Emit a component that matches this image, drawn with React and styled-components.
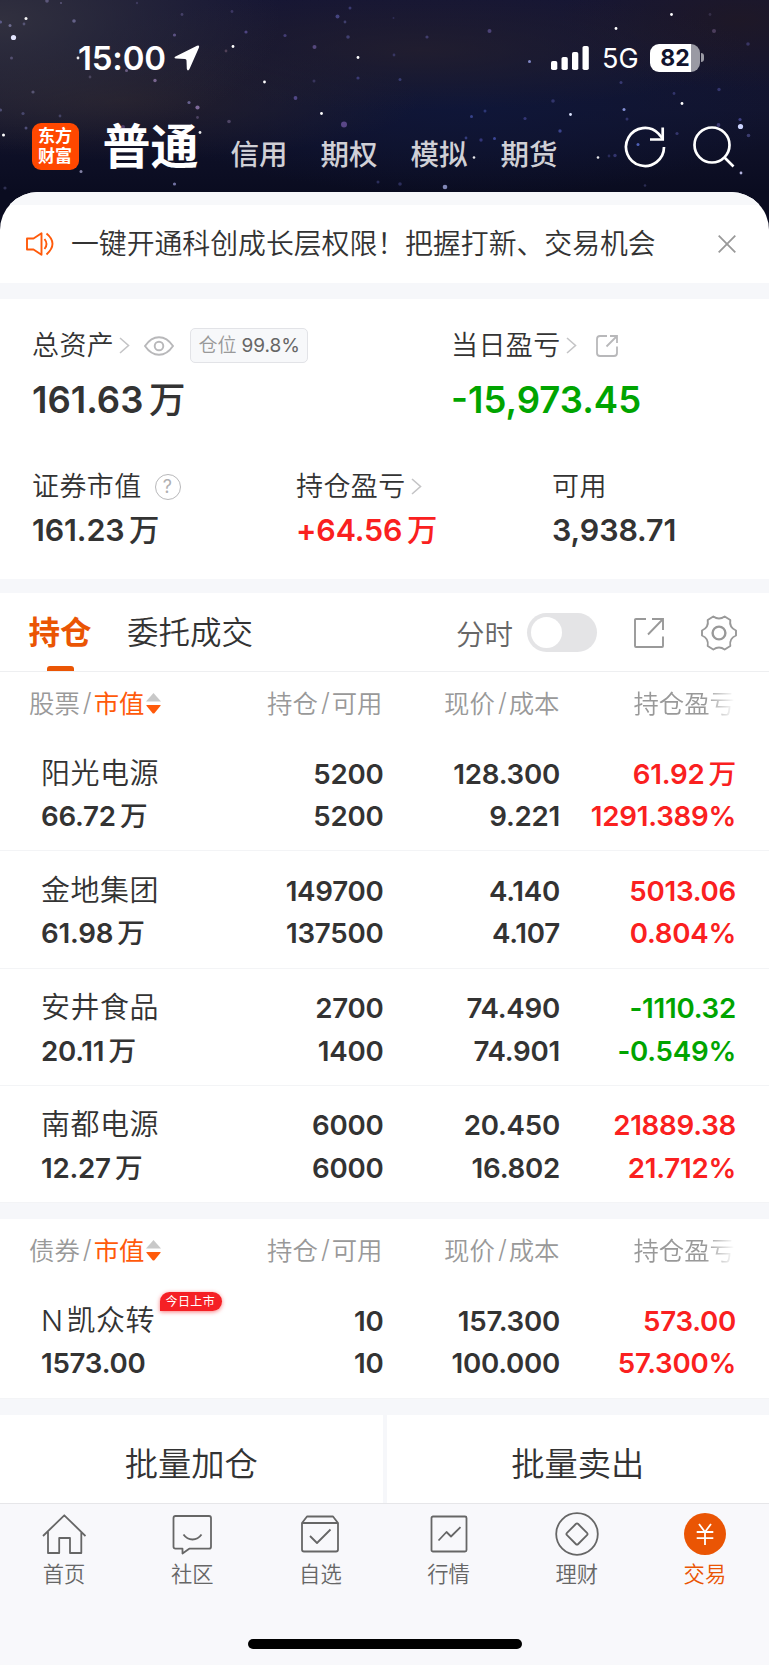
import React from "react";
import styled, { createGlobalStyle } from "styled-components";

const stocks = [
  {
    name: "阳光电源",
    value: "66.72",
    unit: "万",
    hold: ["5200", "5200"],
    price: ["128.300", "9.221"],
    profit: "61.92",
    profitUnit: "万",
    rate: "1291.389%",
    color: "red",
  },
  {
    name: "金地集团",
    value: "61.98",
    unit: "万",
    hold: ["149700", "137500"],
    price: ["4.140", "4.107"],
    profit: "5013.06",
    rate: "0.804%",
    color: "red",
  },
  {
    name: "安井食品",
    value: "20.11",
    unit: "万",
    hold: ["2700", "1400"],
    price: ["74.490", "74.901"],
    profit: "-1110.32",
    rate: "-0.549%",
    color: "green",
  },
  {
    name: "南都电源",
    value: "12.27",
    unit: "万",
    hold: ["6000", "6000"],
    price: ["20.450", "16.802"],
    profit: "21889.38",
    rate: "21.712%",
    color: "red",
  },
];

const bonds = [
  {
    prefix: "N",
    name: "凯众转",
    tag: "今日上市",
    value: "1573.00",
    hold: ["10", "10"],
    price: ["157.300", "100.000"],
    profit: "573.00",
    rate: "57.300%",
    color: "red",
  },
];

// x, y, radius, opacity, color
const stars = [
  [13.5, 37.5, 2.6, 1, "#e4e6ff"],
  [26, 18.5, 1.5, 0.95, "#fff"],
  [10, 25.5, 1.5, 0.6, "#9a98c8"],
  [24, 24, 1.4, 0.45, "#8886b8"],
  [0.5, 22, 1.6, 0.6, "#7a78b8"],
  [47, 1, 1.8, 0.5, "#8c84b8"],
  [61, 3, 1, 0.5, "#8c84b8"],
  [74, 21, 1.8, 0.6, "#8e88bc"],
  [11.5, 58, 1.5, 0.5, "#8078a8"],
  [78, 58, 1.4, 0.9, "#fff"],
  [137, 3, 1.2, 0.3, "#7a70b0"],
  [182, 14.5, 1.4, 0.4, "#7c70b0"],
  [174.5, 35, 1.6, 0.6, "#8474b8"],
  [232, 11.5, 1.4, 0.4, "#6c60a8"],
  [246, 32, 1.6, 0.6, "#6f60b8"],
  [233, 46.5, 1.4, 1, "#fff"],
  [226, 51, 1.4, 0.4, "#9a7890"],
  [126.5, 70.5, 1.5, 0.6, "#9a86b8"],
  [155, 80.5, 1.7, 0.65, "#a68ac0"],
  [90, 77, 1.4, 0.35, "#8c80a8"],
  [33, 92, 1.6, 0.5, "#8884b0"],
  [264.5, 82, 1.4, 1, "#fff"],
  [189, 102.5, 1.6, 0.65, "#8c84c0"],
  [197.5, 107.5, 2.1, 0.7, "#a68ac8"],
  [197.5, 117.5, 1.4, 0.45, "#8470a0"],
  [229, 121.5, 1.8, 0.5, "#84709c"],
  [200, 132.5, 1.4, 0.9, "#fff"],
  [0.5, 110, 1.6, 0.55, "#7474ac"],
  [23, 113.5, 1.6, 0.5, "#6c6ca4"],
  [3.5, 135, 1.5, 1, "#fff"],
  [26, 128, 1.5, 0.55, "#7878b4"],
  [60, 116, 1.4, 0.4, "#7878b4"],
  [81, 171.5, 1.5, 0.75, "#aaa8d0"],
  [174.5, 184, 1.6, 0.7, "#9c9cd8"],
  [5, 188, 1.6, 0.4, "#6666a0"],
  [123, 127, 2, 0.55, "#7c5ca0"],
  [285, 35.5, 1.6, 0.5, "#6c60b8"],
  [295.5, 98, 1.9, 0.6, "#7466c0"],
  [314.5, 47, 2, 0.6, "#7c68b0"],
  [337.5, 16.5, 2, 0.55, "#6868c0"],
  [350, 8, 1.5, 0.5, "#5c5cb0"],
  [345, 22, 1.4, 0.5, "#6464a8"],
  [348, 37, 1.8, 0.5, "#6464b0"],
  [358, 57.5, 1.4, 1, "#fff"],
  [321.5, 113.5, 1.4, 1, "#fff"],
  [344, 124.5, 3, 0.6, "#8868c0"],
  [314, 81, 1.5, 0.35, "#7468b0"],
  [358, 78, 1.6, 0.5, "#5c5cb8"],
  [394, 55, 1.4, 0.4, "#6060b0"],
  [393.5, 18, 1, 0.3, "#6060b0"],
  [427, 37, 1.6, 0.5, "#6460a8"],
  [489.5, 31, 2, 0.55, "#7464b0"],
  [400, 79.5, 1.5, 0.45, "#6068c0"],
  [529.5, 61.5, 1.5, 0.8, "#98a0e8"],
  [553, 101, 1.8, 0.45, "#5c5cb0"],
  [570.5, 114.5, 1.4, 1, "#dce4ff"],
  [485, 111, 1.5, 0.45, "#5060c0"],
  [471.5, 116.5, 1.5, 0.55, "#5868d0"],
  [525, 118.5, 1.6, 0.5, "#5858b8"],
  [481, 140, 1.7, 0.5, "#5858c0"],
  [494.5, 138.5, 1.5, 0.6, "#5868d8"],
  [560, 131, 1.7, 0.6, "#5864c8"],
  [466, 138, 1.4, 0.5, "#5864c8"],
  [474, 157.5, 1.3, 0.9, "#fff"],
  [598, 157.5, 1.3, 0.9, "#fff"],
  [445, 187, 2.3, 0.75, "#a8b0e8"],
  [400, 184, 1.8, 0.4, "#5c60b0"],
  [378, 182, 1.5, 0.4, "#5c60b0"],
  [616, 28.5, 1.4, 1, "#fff"],
  [671.5, 14.5, 1.4, 1, "#fff"],
  [714, 31, 2, 0.5, "#7c6490"],
  [748, 44, 1.8, 0.5, "#58549c"],
  [710, 14.5, 1.4, 0.3, "#6c6490"],
  [621, 82.5, 1.5, 0.5, "#5c5cb0"],
  [624, 109.5, 1.5, 0.85, "#98a4f0"],
  [682, 103.5, 1.4, 1, "#fff"],
  [674, 93.5, 1.4, 0.45, "#5c5cb0"],
  [719, 89.5, 1.7, 0.5, "#5858a8"],
  [627, 119, 1.5, 0.45, "#5c5cb0"],
  [638, 144.5, 1.5, 0.7, "#6880f0"],
  [740.5, 126.5, 2.6, 1, "#ccd4ff"],
  [740, 119.5, 1.6, 0.6, "#6060c0"],
  [718.5, 125, 1.9, 0.55, "#6058a8"],
  [748.5, 135.5, 1.8, 0.55, "#6060a8"],
  [677, 133.5, 1.6, 0.5, "#5858a8"],
  [615, 155.5, 1.7, 0.5, "#5858b0"],
  [609, 156, 1.4, 0.35, "#5858b0"],
  [741, 173, 1.4, 0.85, "#d0d0ff"],
  [645, 185.5, 1.3, 0.35, "#6868b0"],
];

const Star = ({ data: [cx, cy, r, opacity, fill] }) => (
  <circle cx={cx} cy={cy} r={r} opacity={opacity} fill={fill} />
);

const Chevron = () => (
  <svg width='11' height='17' viewBox='0 0 11 17' fill='none' stroke='#c4c4c6' strokeWidth='1.6'>
    <path d='M1 1l8.5 7.5L1 16' />
  </svg>
);

const HoldingRow = ({ item }) => (
  <Row>
    <div>
      <Name>
        {item.prefix && <Prefix>{item.prefix}</Prefix>}
        {item.name}
        {item.tag && <Tag>{item.tag}</Tag>}
      </Name>
      <Num>
        {item.value}
        {item.unit && <Unit>{item.unit}</Unit>}
      </Num>
    </div>
    <Cell>
      {item.hold.map((v, i) => (
        <Num key={i}>{v}</Num>
      ))}
    </Cell>
    <Cell>
      {item.price.map((v, i) => (
        <Num key={i}>{v}</Num>
      ))}
    </Cell>
    <Cell>
      <Num $color={item.color}>
        {item.profit}
        {item.profitUnit && <Unit>{item.profitUnit}</Unit>}
      </Num>
      <Num $color={item.color}>{item.rate}</Num>
    </Cell>
  </Row>
);

const Holdings = ({ title, items }) => (
  <section>
    <TableHead>
      <HeadCell $left>
        {title}
        <Slash>/</Slash>
        <b>市值</b>
        <svg width='15' height='21' viewBox='0 0 15 21'>
          <path d='M7.5 0L15 8.5H0z' fill='#c8c8c8' />
          <path d='M0.8 12h13.4q.8 0 .3.7L8.6 20q-1.1 1.2-2.2 0L.5 12.7q-.5-.7.3-.7z' fill='#ff5a0a' />
        </svg>
      </HeadCell>
      <HeadCell>
        持仓<Slash>/</Slash>可用
      </HeadCell>
      <HeadCell>
        现价<Slash>/</Slash>成本
      </HeadCell>
      <HeadCell $fade>持仓盈亏</HeadCell>
    </TableHead>
    {items.map((item) => (
      <HoldingRow key={item.name} item={item} />
    ))}
  </section>
);

const tabs = [
  {
    label: "首页",
    icon: <path d='M1 24L22.3 3.3 43.5 24M6 20v21h11.2V26H28v15h11.3V20' />,
  },
  {
    label: "社区",
    icon: (
      <>
        <path d='M5.500 4h33.500q2 0 2 2v28.700q0 2-2 2H19.200L12.500 41.500v-4.800H5.500q-2 0-2-2V6q0-2 2-2z' />
        <path d='M13.500 22.500q3.500 5 9 5t9-5' />
      </>
    ),
  },
  {
    label: "自选",
    icon: (
      <>
        <path d='M4 11v26.500q0 2 2 2h32q2 0 2-2V11l-5-6.500H9zM4 11h36' />
        <path d='M12 24l7 7 13.500-13.500' />
      </>
    ),
  },
  {
    label: "行情",
    icon: (
      <>
        <rect x='4.5' y='4.5' width='35' height='35' rx='1.5' />
        <path d='M11.500 28.500l8-8.500 4.500 4.500 9.500-9.300' />
      </>
    ),
  },
  {
    label: "理财",
    icon: (
      <>
        <circle cx='22' cy='22' r='20.8' />
        <path d='M20.800 12q1.200-1.200 2.400 0l8.800 8.800q1.200 1.200 0 2.400L23.200 32q-1.200 1.200-2.400 0L12 23.200q-1.200-1.200 0-2.400z' />
      </>
    ),
  },
  {
    label: "交易",
    active: true,
    icon: (
      <>
        <circle cx='22' cy='22' r='21' fill='#ea5504' stroke='none' />
        <path d='M16 12l6 8L28 12M22 20V33M13.700 20h16.600M13.700 26.200h16.600' stroke='#fff' />
      </>
    ),
  },
];

const App = () => {
  return (
    <>
      <GlobalStyle />
      <Screen>
        <Header>
          <Sky viewBox='0 0 769 232'>
            {stars.map((s, i) => (
              <Star key={i} data={s} />
            ))}
          </Sky>
          <StatusBar>
            <Time>15:00</Time>
            <svg width='26' height='26' viewBox='0 0 26 26'>
              <path
                d='M1.500 11.500L23 .8q2.700-1 2 1.700L15.500 24q-1.800 3-2.700-.3l-.3-8.200q0-1.500-1.500-1.500l-9-.5q-2.700-.5-.5-2z'
                fill='#fff'
              />
            </svg>
            <StatusRight>
              <svg width='38' height='24' viewBox='0 0 38 24' fill='#fff'>
                <rect x='0' y='15' width='6.3' height='9' rx='1.8' />
                <rect x='10.5' y='11' width='6.3' height='13' rx='1.8' />
                <rect x='21' y='6' width='6.3' height='18' rx='1.8' />
                <rect x='31.5' y='0' width='6.3' height='24' rx='1.8' />
              </svg>
              <Network>5G</Network>
              <Battery>82</Battery>
              <BatteryCap />
            </StatusRight>
          </StatusBar>
          <NavBar>
            <Logo>
              <span>东方</span>
              <span>财富</span>
            </Logo>
            <NavCurrent>普通</NavCurrent>
            <NavItem>信用</NavItem>
            <NavItem>期权</NavItem>
            <NavItem>模拟</NavItem>
            <NavItem>期货</NavItem>
            <NavIcons>
              <svg width='42' height='42' viewBox='0 0 42 42' fill='none' stroke='#fff' strokeWidth='2.7'>
                <path d='M40 21A19 19 0 1 1 34.500 7.600L39 13' />
                <path d='M38.700 1.500v12H26' />
              </svg>
              <svg width='42' height='42' viewBox='0 0 42 42' fill='none' stroke='#fff' strokeWidth='2.7'>
                <circle cx='19' cy='19' r='17.5' />
                <path d='M31.500 31.500l9 9' />
              </svg>
            </NavIcons>
          </NavBar>
        </Header>

        <Sheet>
          <Notice>
            <svg width='28' height='24' viewBox='0 0 28 24' fill='none' stroke='#ff5a0a' strokeWidth='1.9'>
              <path d='M1 6.500h6.500L15.500 1.200v21.600L7.500 17.500H1z' strokeLinejoin='round' />
              <path d='M18.500 7q4 5 0 10M20.500 1.500q12 10 0 21' />
            </svg>
            <p>一键开通科创成长层权限！把握打新、交易机会</p>
            <svg width='18' height='18' viewBox='0 0 18 18' stroke='#999' strokeWidth='1.8'>
              <path d='M.7.7l16.600 16.600M17.300.7L.7 17.300' />
            </svg>
          </Notice>

          <Summary>
            <TopStats>
              <div>
                <Label>
                  总资产
                  <Chevron />
                  <Eye width='30' height='20' viewBox='0 0 30 20' fill='none' stroke='#b8b8ba' strokeWidth='1.9'>
                    <path d='M1 10q6-8.800 14-8.800T29 10q-6 8.800-14 8.800T1 10z' />
                    <circle cx='15' cy='10' r='4.3' />
                  </Eye>
                  <Position>
                    <span>仓位</span>99.8%
                  </Position>
                </Label>
                <BigNum>
                  161.63<Unit>万</Unit>
                </BigNum>
              </div>
              <div>
                <Label>
                  当日盈亏
                  <Chevron />
                  <ShareSmall width='22' height='22' viewBox='0 0 22 22' fill='none' stroke='#b8b8ba' strokeWidth='1.8'>
                    <path d='M11 1H4Q1 1 1 4v14q0 3 3 3h14q3 0 3-3v-6.500M14 1h7v7M21 1L10.500 11.500' />
                  </ShareSmall>
                </Label>
                <BigNum $color='green'>-15,973.45</BigNum>
              </div>
            </TopStats>
            <SubStats>
              <div>
                <Label>
                  证券市值
                  <Help>?</Help>
                </Label>
                <MidNum>
                  161.23<Unit>万</Unit>
                </MidNum>
              </div>
              <div>
                <Label>
                  持仓盈亏
                  <Chevron />
                </Label>
                <MidNum $color='red'>
                  +64.56<Unit>万</Unit>
                </MidNum>
              </div>
              <div>
                <Label>可用</Label>
                <MidNum>3,938.71</MidNum>
              </div>
            </SubStats>
          </Summary>

          <TabRow>
            <TabItem $active>持仓</TabItem>
            <TabItem>委托成交</TabItem>
            <TabTools>
              <span>分时</span>
              <Switch>
                <i />
              </Switch>
              <svg width='30' height='30' viewBox='0 0 30 30' fill='none' stroke='#999' strokeWidth='1.9'>
                <path d='M12 1H2Q1 1 1 2v26q0 1 1 1h26q1 0 1-1V18.500M18 1h11v11M29 1L14 16.500' />
              </svg>
              <svg width='36' height='36' viewBox='0 0 36 36' fill='none' stroke='#999' strokeWidth='1.9'>
                <path
                  strokeLinejoin='round'
                  d='M12.300 1.500Q18 5.500 23.700 1.500L29.300 5Q28 12.500 35 15.500V20.500Q28 23.500 29.300 31L23.700 34.500Q18 30.500 12.300 34.500L6.700 31Q8 23.500 1 20.500V15.500Q8 12.500 6.700 5Z'
                />
                <circle cx='18' cy='18' r='6.4' strokeWidth='2.4' />
              </svg>
            </TabTools>
          </TabRow>

          <Holdings title='股票' items={stocks} />
          <Gap />
          <Holdings title='债券' items={bonds} />
          <Actions>
            <button>批量加仓</button>
            <button>批量卖出</button>
          </Actions>
        </Sheet>

        <TabBar>
          {tabs.map((tab) => (
            <Tab key={tab.label} $active={tab.active}>
              <svg
                width='44'
                height='44'
                viewBox='0 0 44 44'
                fill='none'
                stroke='#666'
                strokeWidth='1.8'
                strokeLinejoin='round'
              >
                {tab.icon}
              </svg>
              {tab.label}
            </Tab>
          ))}
        </TabBar>
        <HomeArea>
          <HomeIndicator />
        </HomeArea>
      </Screen>
    </>
  );
};

const colors = { red: "#fa2020", green: "#00a400" };

const GlobalStyle = createGlobalStyle`
  * {
    margin: 0;
    padding: 0;
    box-sizing: border-box;
  }
  body {
    background: #f8f8fb;
    font-family: Inter, "Noto Sans CJK SC", sans-serif;
    font-weight: 350;
    color: #333;
  }
  svg {
    display: block;
    flex: none;
  }
`;

const Screen = styled.div`
  width: 769px;
  height: 1665px;
  overflow: hidden;
  white-space: nowrap;
`;

const Header = styled.header`
  position: relative;
  height: 232px;
  background: radial-gradient(ellipse 280px 130px at 0 20px, rgba(52, 51, 64, 0.9), transparent),
    radial-gradient(ellipse 330px 60px at 420px 50px, rgba(36, 31, 46, 0.8), transparent),
    radial-gradient(ellipse 300px 60px at 120px 100px, rgba(42, 35, 44, 0.75), transparent),
    radial-gradient(ellipse 180px 70px at 740px 20px, rgba(32, 24, 36, 0.8), transparent),
    radial-gradient(ellipse 330px 90px at 470px 105px, #0f1638, transparent),
    linear-gradient(180deg, #161634 0, #12142e 110px, #0a0c20 192px);
`;

/* stars lie over the header gradient */
const Sky = styled.svg`
  position: absolute;
  inset: 0;
  width: 769px;
  height: 232px;
`;

const StatusBar = styled.div`
  position: relative;
  display: flex;
  align-items: center;
  height: 115px;
  padding: 0 65px 0 78px;
  color: #fff;
`;

const Time = styled.span`
  width: 96px;
  font-size: 33px;
  font-weight: 600;
  letter-spacing: -0.2px;
`;

const StatusRight = styled.div`
  display: flex;
  align-items: center;
  margin-left: auto;
`;

const Network = styled.span`
  width: 48px;
  margin-left: 13px;
  padding-top: 2px;
  font-size: 27px;
  font-weight: 400;
`;

const Battery = styled.span`
  width: 50px;
  height: 28px;
  border-radius: 9px;
  background: linear-gradient(90deg, #fff 41px, #9a9aa4 41px);
  color: #12142e;
  font-size: 23px;
  font-weight: 700;
  line-height: 28px;
  text-align: center;
`;

const BatteryCap = styled.i`
  width: 3px;
  height: 9px;
  margin-left: 1px;
  border-radius: 0 4px 4px 0;
  background: #9a9aa4;
`;

const NavBar = styled.nav`
  position: relative;
  display: flex;
  height: 63px;
  padding-left: 31.5px;
  color: #fff;
`;

const Logo = styled.div`
  display: flex;
  flex-direction: column;
  align-items: center;
  justify-content: center;
  width: 47px;
  height: 47px;
  margin: 8px 24px 0 0;
  border-radius: 9px;
  background: #ff4800;
  font-size: 17px;
  font-weight: 700;
  line-height: 19.5px;
`;

const NavCurrent = styled.strong`
  width: 128px;
  font-size: 48px;
  font-weight: 700;
  line-height: 63px;
`;

const NavItem = styled.span`
  width: 90px;
  padding-top: 20px;
  color: #d0d0d6;
  font-size: 28.5px;
  font-weight: 500;
  line-height: 40px;
`;

const NavIcons = styled.div`
  display: flex;
  gap: 27px;
  margin: 11px 0 0 33px;
`;

const Sheet = styled.main`
  position: relative;
  height: 1311px;
  margin-top: -40px;
  border-radius: 38px 38px 0 0;
  overflow: hidden;
  background: #fff;
`;

const Notice = styled.div`
  display: flex;
  align-items: center;
  height: 107px;
  padding: 0 33px 0 26px;
  border-top: 13px solid #f7f8fa;
  border-bottom: 16px solid #f6f7fa;

  p {
    flex: 1;
    margin-left: 17px;
    font-size: 27.85px;
    line-height: 40px;
    padding-bottom: 1px;
  }
`;

const Summary = styled.section`
  height: 294px;
  padding: 25px 0 0 32px;
  border-bottom: 14px solid #f6f7fa;
`;

const TopStats = styled.div`
  display: grid;
  grid-template-columns: 419px 1fr;
  height: 141px;
`;

const SubStats = styled.div`
  display: grid;
  grid-template-columns: 264px 256px 1fr;
`;

const Label = styled.div`
  display: flex;
  align-items: center;
  height: 43px;
  font-size: 27px;
  letter-spacing: 0.4px;
  line-height: 40px;

  svg {
    margin-left: 5px;
  }
`;

const Eye = styled.svg`
  && {
    margin-left: 14px;
  }
`;

const ShareSmall = styled.svg`
  && {
    margin-left: 19px;
  }
`;

const Position = styled.span`
  display: flex;
  align-items: center;
  justify-content: center;
  gap: 5px;
  width: 118px;
  height: 35px;
  margin-left: 16px;
  border: 1px solid #e2e3e7;
  border-radius: 5px;
  background: #f7f8fa;
  color: #666;
  font-size: 19px;
  font-weight: 400;
  letter-spacing: 0;

  span {
    color: #999;
    font-weight: 350;
  }
`;

const Help = styled.i`
  width: 26px;
  height: 26px;
  margin-left: 13px;
  border: 1.8px solid #b8b8ba;
  border-radius: 50%;
  color: #b0b0b2;
  font-size: 18px;
  font-style: normal;
  font-weight: 400;
  line-height: 23px;
  text-align: center;
`;

const Num = styled.div`
  height: 42.5px;
  color: ${(props) => colors[props.$color] || "#333"};
  font-size: 27.7px;
  font-weight: 600;
  letter-spacing: -0.25px;
  line-height: 42.5px;
`;

const BigNum = styled(Num)`
  height: 66px;
  font-size: 36.5px;
  letter-spacing: 0;
  line-height: 66px;
`;

const MidNum = styled(Num)`
  height: 44px;
  font-size: 30.4px;
  letter-spacing: -0.1px;
  line-height: 44px;
`;

const Unit = styled.span`
  margin-left: 0.15em;
  font-weight: 500;
`;

const TabRow = styled.div`
  display: flex;
  height: 79px;
  padding: 0 32px 0 28.5px;
  border-bottom: 1px solid #eeeff1;
`;

const TabItem = styled.div`
  margin-right: 35.5px;
  padding-top: 1px;
  color: ${(props) => (props.$active ? "#ea5504" : "#333")};
  font-size: 31.5px;
  font-weight: ${(props) => (props.$active ? 700 : 350)};
  line-height: 78px;

  &::after {
    content: "";
    display: ${(props) => (props.$active ? "block" : "none")};
    width: 27px;
    height: 5px;
    margin: -6px auto 0;
    border-radius: 3px 3px 0 0;
    background: #ea5504;
  }
`;

const TabTools = styled.div`
  display: flex;
  align-items: center;
  height: 79px;
  margin-left: auto;
  color: #666;
  font-size: 28.5px;

  svg {
    margin-left: 37px;
  }
`;

const Switch = styled.div`
  width: 70px;
  height: 39px;
  margin-left: 14px;
  padding: 4px;
  border-radius: 20px;
  background: #e4e4e6;

  i {
    display: block;
    width: 31px;
    height: 31px;
    border-radius: 50%;
    background: #fff;
  }
`;

const TableHead = styled.div`
  display: grid;
  grid-template-columns: 202px 151.5px 177px 175.5px;
  height: 62px;
  padding: 0 0 3px 29px;
`;

const HeadCell = styled.div`
  display: flex;
  align-items: center;
  justify-content: ${(props) => (props.$left ? "flex-start" : "flex-end")};
  color: #999;
  font-size: 25.4px;
  ${(props) =>
    props.$fade &&
    "mask-image: linear-gradient(90deg, #000 calc(100% - 30px), transparent);"}

  b {
    color: #ff5a0a;
    font-weight: 400;
  }
  svg {
    margin: 3px 0 0 2px;
  }
`;

const Slash = styled.span`
  margin: 0 2px 0 3px;
`;

const Row = styled.div`
  display: grid;
  grid-template-columns: 166px 176.5px 176.5px 176px;
  height: 117.33px;
  padding: 18.5px 0 0 41px;
  border-bottom: 1px solid #f3f4f6;
`;

const Name = styled.div`
  display: flex;
  height: 42.5px;
  font-size: 29px;
  letter-spacing: 0.5px;
  line-height: 42.5px;
`;

const Prefix = styled.span`
  margin-right: 3px;
`;

/* sits at the upper right corner of the name */
const Tag = styled.span`
  height: 19px;
  margin: -7.5px 0 0 4.5px;
  padding: 0 7px 0 6px;
  border-radius: 10px 10px 10px 0;
  background: #f52025;
  box-shadow: 0 1px 4px rgba(245, 32, 37, 0.6);
  color: #fff;
  font-size: 12px;
  font-weight: 400;
  letter-spacing: 0.4px;
  line-height: 19px;
`;

const Cell = styled.div`
  text-align: right;
`;

const Gap = styled.div`
  height: 16px;
  background: #f6f7fa;
`;

const Actions = styled.div`
  display: grid;
  grid-template-columns: 1fr 1fr;
  gap: 4px;
  height: 105px;
  padding-top: 16px;
  background: #f6f7fa;

  button {
    height: 89px;
    padding-top: 10px;
    border: none;
    background: #fff;
    color: #333;
    font: inherit;
    font-size: 33.3px;
    line-height: 79px;
  }
`;

const TabBar = styled.footer`
  display: grid;
  grid-template-columns: repeat(6, 1fr);
  height: 136px;
  padding-top: 8px;
  border-top: 1px solid #e6e6e9;
  background: #f8f8fb;
`;

const Tab = styled.div`
  display: flex;
  flex-direction: column;
  align-items: center;
  color: ${(props) => (props.$active ? "#ea5504" : "#666")};
  font-size: 21.3px;
  line-height: 37px;
`;

const HomeArea = styled.div`
  display: flex;
  justify-content: center;
`;

const HomeIndicator = styled.div`
  width: 274px;
  height: 10px;
  border-radius: 5px;
  background: #000;
`;

export default App;
